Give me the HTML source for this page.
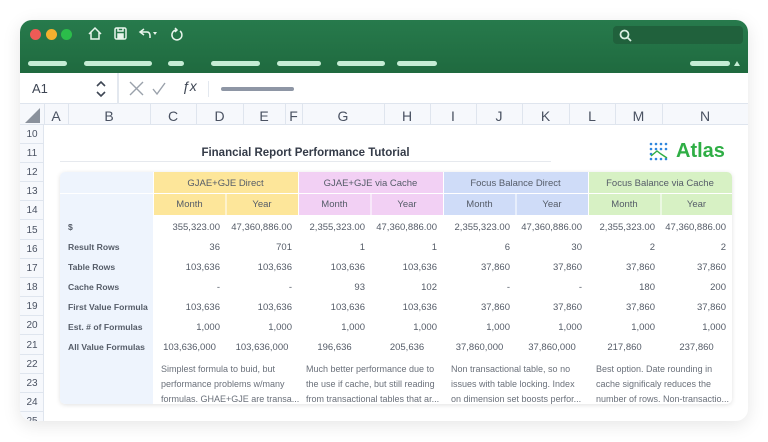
<!DOCTYPE html>
<html><head><meta charset="utf-8"><style>
*{margin:0;padding:0;box-sizing:border-box}
body{width:768px;height:442px;background:#fff;font-family:"Liberation Sans",sans-serif;position:relative;overflow:hidden}
.a{position:absolute}
.win{left:20px;top:20px;width:728px;height:401px;border-radius:12px;background:#fff;box-shadow:0 4px 18px rgba(0,0,0,.10);overflow:hidden}
.bar{background:#fff;height:5px;border-radius:3px;background:#c5ecd4}
.ch{font-size:14px;color:#4a5262;text-align:center;top:107px;height:18px;line-height:18px}
.rn{left:0;width:24px;font-size:10px;color:#4a5262;text-align:center;height:19px;line-height:19px;border-bottom:1px solid #dfe5ee}
.t{font-size:9.5px;color:#555c68}
.r{text-align:right}
.c{text-align:center}
.lab{font-size:8.6px;font-weight:bold;color:#555c68;left:68px}
.note{font-size:9px;color:#6a707a;line-height:15px}
</style></head><body>
<div class="a win">
 <div class="a" style="left:0;top:0;width:728px;height:53px;background:linear-gradient(#277a4c,#1f6a3f)"></div>
 <div class="a" style="left:10px;top:9px;width:11px;height:11px;border-radius:50%;background:#ee5b56"></div>
 <div class="a" style="left:26px;top:9px;width:11px;height:11px;border-radius:50%;background:#f4b02e"></div>
 <div class="a" style="left:41px;top:9px;width:11px;height:11px;border-radius:50%;background:#2bbd4a"></div>
 <svg class="a" style="left:66px;top:5px" width="110" height="18" viewBox="0 0 110 18" fill="none" stroke="#e8f5ec" stroke-width="1.5">
  <path d="M3 9 L9 3 L15 9 M5 7 V14 H13 V7"/>
  <rect x="29" y="3" width="11" height="11" rx="1.5"/><rect x="32" y="9" width="5" height="4" fill="#e8f5ec"/><path d="M32 3v3h5V3"/>
  <path d="M58 10 L54 7 L58 4 M54 7 H61 Q64 7 64 11 V13"/><path d="M67 7 l2 3 l2 -3z" fill="#e8f5ec" stroke="none"/>
  <path d="M90 5 A5 5 0 1 0 94 6 M89 3 L91 5 L89 7"/>
 </svg>
 <div class="a" style="left:593px;top:6px;width:130px;height:18px;border-radius:4px;background:#20613c"></div>
 <svg class="a" style="left:599px;top:9px" width="13" height="13" fill="none" stroke="#d8efe0" stroke-width="1.8"><circle cx="5.5" cy="5.5" r="4"/><path d="M8.5 8.5 L12 12"/></svg>
 <div class="a bar" style="left:8px;top:41px;width:39px"></div>
 <div class="a bar" style="left:64px;top:41px;width:68px"></div>
 <div class="a bar" style="left:148px;top:41px;width:16px"></div>
 <div class="a bar" style="left:191px;top:41px;width:49px"></div>
 <div class="a bar" style="left:257px;top:41px;width:44px"></div>
 <div class="a bar" style="left:317px;top:41px;width:48px"></div>
 <div class="a bar" style="left:377px;top:41px;width:40px"></div>
 <div class="a bar" style="left:670px;top:41px;width:40px"></div>
 <div class="a" style="left:714px;top:41px;width:0;height:0;border-left:3px solid transparent;border-right:3px solid transparent;border-bottom:5px solid #c5ecd4"></div>
 <div class="a" style="left:0;top:53px;width:728px;height:31px;border-bottom:1px solid #dfe5ee"></div>
 <div class="a" style="left:12px;top:61px;font-size:13px;color:#3e4654">A1</div>
 <svg class="a" style="left:75px;top:60px" width="12" height="18" fill="none" stroke="#3e4654" stroke-width="1.6"><path d="M2 6 L6 2 L10 6 M2 12 L6 16 L10 12"/></svg>
 <div class="a" style="left:97px;top:53px;width:2px;height:31px;background:#e3e8ef"></div>
 <svg class="a" style="left:108px;top:60px" width="50" height="18" fill="none" stroke="#9aa1ab" stroke-width="1.4"><path d="M2 2 L15 15 M15 2 L2 15"/><path d="M25 9 L29 14 L37 3"/></svg>
 <div class="a" style="left:162px;top:58px;font-size:14px;font-style:italic;color:#3e4654">ƒx</div>
 <div class="a" style="left:188px;top:61px;width:1px;height:16px;background:#e3e8ef"></div>
 <div class="a" style="left:201px;top:67px;width:73px;height:4px;border-radius:2px;background:#8e96a5"></div>
 <div class="a" style="left:0;top:84px;width:728px;height:21px;background:#f6f8fc;border-bottom:1px solid #dfe5ee"></div>
 <svg class="a" style="left:5px;top:88px" width="16" height="16"><path d="M15 0 V15 H0z" fill="#8a919c"/></svg>
 <div class="a" style="left:0;top:84px;width:728px;height:21px">
  <div class="a" style="left:24px;width:1px;height:21px;background:#dfe5ee"></div>
 </div>
 <div class="a" style="left:0;top:0;width:728px;height:105px">
  <div class="a ch" style="left:24px;width:24px;top:87px">A</div>
  <div class="a ch" style="left:48px;width:82px;top:87px">B</div>
  <div class="a ch" style="left:130px;width:46px;top:87px">C</div>
  <div class="a ch" style="left:176px;width:47px;top:87px">D</div>
  <div class="a ch" style="left:223px;width:42px;top:87px">E</div>
  <div class="a ch" style="left:265px;width:17px;top:87px">F</div>
  <div class="a ch" style="left:282px;width:82px;top:87px">G</div>
  <div class="a ch" style="left:364px;width:46px;top:87px">H</div>
  <div class="a ch" style="left:410px;width:46px;top:87px">I</div>
  <div class="a ch" style="left:456px;width:46px;top:87px">J</div>
  <div class="a ch" style="left:502px;width:47px;top:87px">K</div>
  <div class="a ch" style="left:549px;width:46px;top:87px">L</div>
  <div class="a ch" style="left:595px;width:47px;top:87px">M</div>
  <div class="a ch" style="left:642px;width:86px;top:87px">N</div>
 </div>
 <svg class="a" style="left:0;top:84px" width="728" height="21"><g stroke="#dfe5ee"><path d="M48.5 0V21M130.5 0V21M176.5 0V21M223.5 0V21M265.5 0V21M282.5 0V21M364.5 0V21M410.5 0V21M456.5 0V21M502.5 0V21M549.5 0V21M595.5 0V21M642.5 0V21"/></g></svg>
 <div class="a" style="left:0;top:105px;width:24px;height:300px;background:#f6f8fc;border-right:1px solid #dfe5ee"></div>
 <div class="a rn" style="top:105px">10</div><div class="a rn" style="top:124px">11</div><div class="a rn" style="top:143px">12</div>
 <div class="a rn" style="top:162px">13</div><div class="a rn" style="top:181px">14</div><div class="a rn" style="top:201px">15</div>
 <div class="a rn" style="top:220px">16</div><div class="a rn" style="top:239px">17</div><div class="a rn" style="top:258px">18</div>
 <div class="a rn" style="top:277px">19</div><div class="a rn" style="top:296px">20</div><div class="a rn" style="top:316px">21</div>
 <div class="a rn" style="top:335px">22</div><div class="a rn" style="top:354px">23</div><div class="a rn" style="top:373px">24</div>
 <div class="a rn" style="top:392px">25</div>
 <div class="a" style="left:40px;top:127px;width:491px;text-align:center;font-size:11.5px;font-weight:bold;color:#343b48">Financial Report Performance Tutorial</div>
 <div class="a" style="left:40px;top:141px;width:491px;height:1px;background:#e6e9ee"></div>
 <svg class="a" style="left:629px;top:122px" width="22" height="22"><g fill="#2e86de"><circle cx="2" cy="2" r="1.3"/><circle cx="7" cy="2" r="1.3"/><circle cx="12" cy="2" r="1.3"/><circle cx="17" cy="2" r="1.3"/><circle cx="2" cy="7" r="1.3"/><circle cx="2" cy="12" r="1.3"/><circle cx="2" cy="17" r="1.3"/><circle cx="7" cy="17" r="1.3"/><circle cx="12" cy="17" r="1.3"/><circle cx="17" cy="17" r="1.3"/><circle cx="17" cy="7" r="1.3"/><circle cx="12" cy="7" r="1.3"/><circle cx="7" cy="7" r="1.3"/></g><path d="M2 14 L8 9 L12 12 L18 16" stroke="#2fae45" stroke-width="1.4" fill="none"/></svg>
 <div class="a" style="left:656px;top:120px;font-size:20px;font-weight:bold;color:#2fae45">Atlas</div>
 <div class="a" style="left:40px;top:152px;width:672px;height:232px;border-radius:5px;background:#fff;box-shadow:0 1px 5px rgba(0,0,0,.12);overflow:hidden">
  <div class="a" style="left:0;top:0;width:93px;height:232px;background:#eef4fd"></div>
  <div class="a" style="left:0;top:21px;width:93px;height:1px;background:#fff"></div>
  <div class="a" style="left:93px;top:0;width:145px;height:43px;background:#fde69a"></div>
  <div class="a" style="left:238px;top:0;width:145px;height:43px;background:#f2d0f4"></div>
  <div class="a" style="left:383px;top:0;width:145px;height:43px;background:#cfdcf8"></div>
  <div class="a" style="left:528px;top:0;width:144px;height:43px;background:#d7f1c4"></div>
  <div class="a" style="left:93px;top:21px;width:579px;height:1px;background:#fff"></div>
  <svg class="a" style="left:0;top:0" width="672" height="43"><path d="M93.5 0V43M238.5 0V43M383.5 0V43M528.5 0V43M166 22V43M311 22V43M456 22V43M601 22V43" stroke="#fff"/></svg>
  <div class="a t c" style="left:93px;top:6px;width:145px">GJAE+GJE Direct</div>
  <div class="a t c" style="left:238px;top:6px;width:145px">GJAE+GJE via Cache</div>
  <div class="a t c" style="left:383px;top:6px;width:145px">Focus Balance Direct</div>
  <div class="a t c" style="left:528px;top:6px;width:144px">Focus Balance via Cache</div>
  <div class="a t c" style="left:93px;top:27px;width:73px">Month</div><div class="a t c" style="left:166px;top:27px;width:72px">Year</div>
  <div class="a t c" style="left:238px;top:27px;width:73px">Month</div><div class="a t c" style="left:311px;top:27px;width:72px">Year</div>
  <div class="a t c" style="left:383px;top:27px;width:73px">Month</div><div class="a t c" style="left:456px;top:27px;width:72px">Year</div>
  <div class="a t c" style="left:528px;top:27px;width:73px">Month</div><div class="a t c" style="left:601px;top:27px;width:71px">Year</div>
 </div>
 <div class="a" style="left:40px;top:154px;width:672px;height:232px;font-size:9.5px;color:#555c68">
  <div class="a lab" style="left:8px;top:48px">$</div>
  <div class="a lab" style="left:8px;top:68px">Result Rows</div>
  <div class="a lab" style="left:8px;top:88px">Table Rows</div>
  <div class="a lab" style="left:8px;top:108px">Cache Rows</div>
  <div class="a lab" style="left:8px;top:128px">First Value Formula</div>
  <div class="a lab" style="left:8px;top:148px">Est. # of Formulas</div>
  <div class="a lab" style="left:8px;top:168px">All Value Formulas</div>
  <table class="a" style="left:93px;top:43px;width:579px;border-collapse:collapse;font-size:9.5px;color:#555c68">
   <colgroup><col style="width:73px"><col style="width:72px"><col style="width:73px"><col style="width:72px"><col style="width:73px"><col style="width:72px"><col style="width:73px"><col style="width:71px"></colgroup>
   <tr style="height:20px"><td class="r" style="padding-right:6px">355,323.00</td><td class="r" style="padding-right:6px">47,360,886.00</td><td class="r" style="padding-right:6px">2,355,323.00</td><td class="r" style="padding-right:6px">47,360,886.00</td><td class="r" style="padding-right:6px">2,355,323.00</td><td class="r" style="padding-right:6px">47,360,886.00</td><td class="r" style="padding-right:6px">2,355,323.00</td><td class="r" style="padding-right:6px">47,360,886.00</td></tr>
   <tr style="height:20px"><td class="r" style="padding-right:6px">36</td><td class="r" style="padding-right:6px">701</td><td class="r" style="padding-right:6px">1</td><td class="r" style="padding-right:6px">1</td><td class="r" style="padding-right:6px">6</td><td class="r" style="padding-right:6px">30</td><td class="r" style="padding-right:6px">2</td><td class="r" style="padding-right:6px">2</td></tr>
   <tr style="height:20px"><td class="r" style="padding-right:6px">103,636</td><td class="r" style="padding-right:6px">103,636</td><td class="r" style="padding-right:6px">103,636</td><td class="r" style="padding-right:6px">103,636</td><td class="r" style="padding-right:6px">37,860</td><td class="r" style="padding-right:6px">37,860</td><td class="r" style="padding-right:6px">37,860</td><td class="r" style="padding-right:6px">37,860</td></tr>
   <tr style="height:20px"><td class="r" style="padding-right:6px">-</td><td class="r" style="padding-right:6px">-</td><td class="r" style="padding-right:6px">93</td><td class="r" style="padding-right:6px">102</td><td class="r" style="padding-right:6px">-</td><td class="r" style="padding-right:6px">-</td><td class="r" style="padding-right:6px">180</td><td class="r" style="padding-right:6px">200</td></tr>
   <tr style="height:20px"><td class="r" style="padding-right:6px">103,636</td><td class="r" style="padding-right:6px">103,636</td><td class="r" style="padding-right:6px">103,636</td><td class="r" style="padding-right:6px">103,636</td><td class="r" style="padding-right:6px">37,860</td><td class="r" style="padding-right:6px">37,860</td><td class="r" style="padding-right:6px">37,860</td><td class="r" style="padding-right:6px">37,860</td></tr>
   <tr style="height:20px"><td class="r" style="padding-right:6px">1,000</td><td class="r" style="padding-right:6px">1,000</td><td class="r" style="padding-right:6px">1,000</td><td class="r" style="padding-right:6px">1,000</td><td class="r" style="padding-right:6px">1,000</td><td class="r" style="padding-right:6px">1,000</td><td class="r" style="padding-right:6px">1,000</td><td class="r" style="padding-right:6px">1,000</td></tr>
   <tr style="height:20px"><td class="c">103,636,000</td><td class="c">103,636,000</td><td class="c">196,636</td><td class="c">205,636</td><td class="c">37,860,000</td><td class="c">37,860,000</td><td class="c">217,860</td><td class="c">237,860</td></tr>
  </table>
  <div class="a note" style="left:101px;top:188px;width:140px">Simplest formula to buid, but<br>performance problems w/many<br>formulas. GHAE+GJE are transa...</div>
  <div class="a note" style="left:246px;top:188px;width:140px">Much better performance due to<br>the use if cache, but still reading<br>from transactional tables that ar...</div>
  <div class="a note" style="left:391px;top:188px;width:140px">Non transactional table, so no<br>issues with table locking. Index<br>on dimension set boosts perfor...</div>
  <div class="a note" style="left:536px;top:188px;width:140px">Best option. Date rounding in<br>cache significaly reduces the<br>number of rows. Non-transactio...</div>
 </div>
</div>
</body></html>
